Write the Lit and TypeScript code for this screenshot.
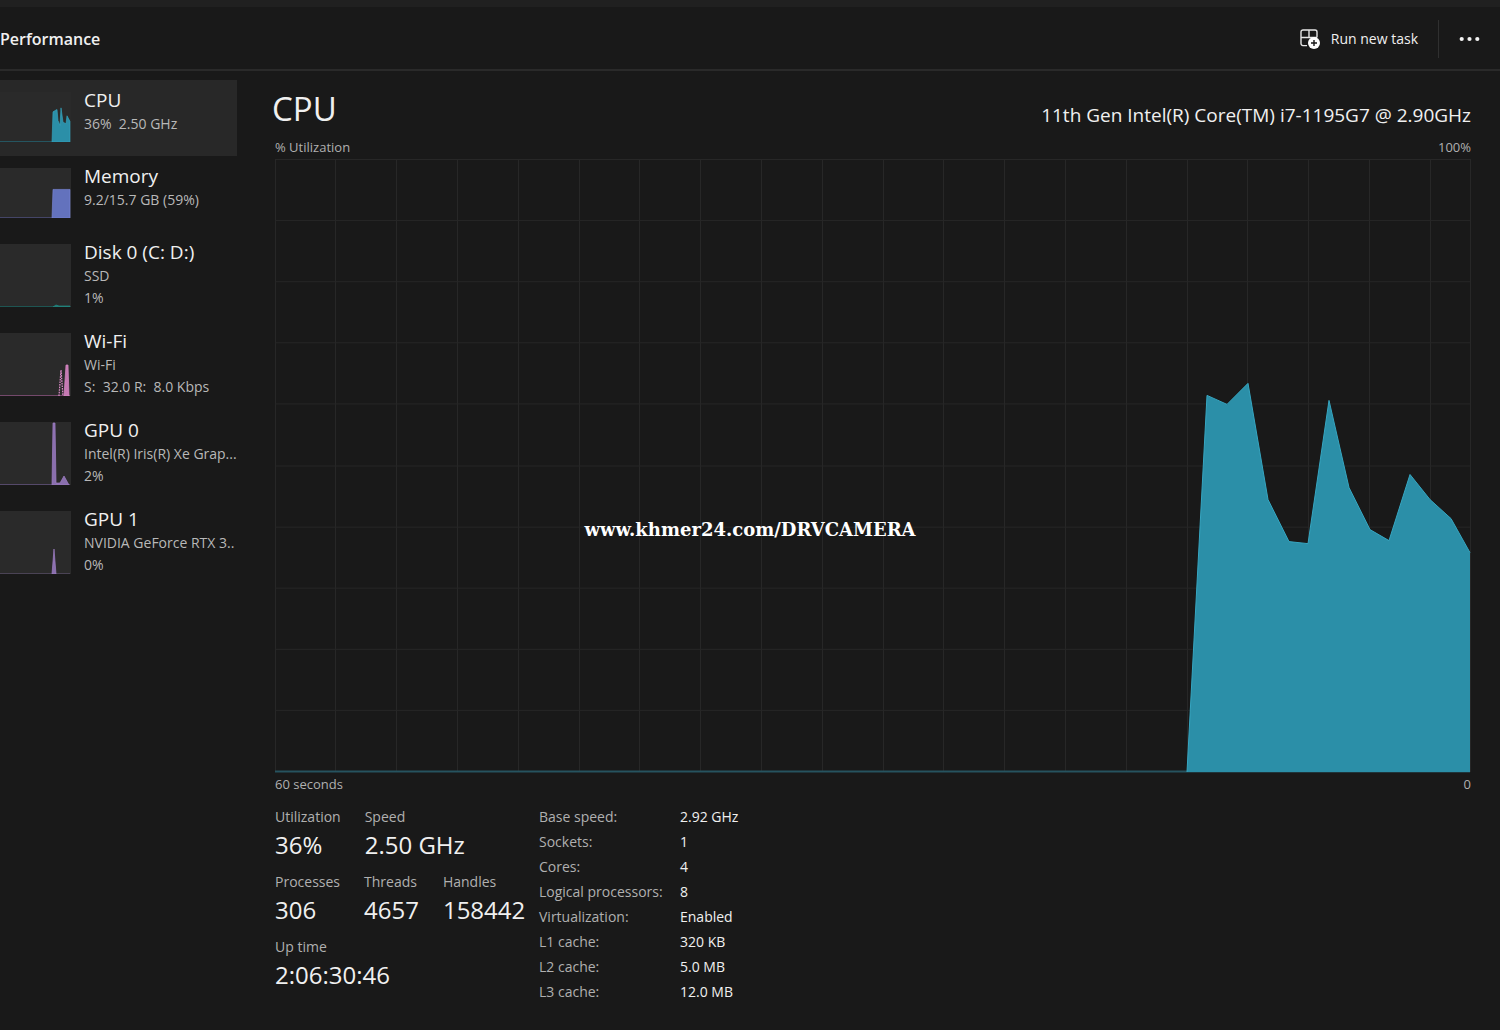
import { LitElement, html, svg, css } from "lit";
import { customElement, property, state } from "lit/decorators.js";

interface Device {
  name: string;
  lines: string[];
  color: string;
  edge: string;
  base: string;
  area: string;
  dashed?: string;
}

// Thumbnail paths are drawn in a 71 x 63 box, with the baseline at y = 63.
const DEVICES: Device[] = [
  { name: "CPU", lines: ["36%\u00a0 2.50 GHz"], color: "#2b8fa8", edge: "#36a6c1", base: "#24606e",
    area: "M52 63 L53 25 L57 22 L58 36 L60 42 L61 20 L63 38 L66 40 L67 30 L70 37 L70 63 Z" },
  { name: "Memory", lines: ["9.2/15.7 GB (59%)"], color: "#6372bd", edge: "#7c88da", base: "#4b4c75",
    area: "M52 63 L53 27 L70 27 L70 63 Z" },
  { name: "Disk 0 (C: D:)", lines: ["SSD", "1%"], color: "#1f7a75", edge: "#238a83", base: "#1e5552",
    area: "M53 63 L56 61 L59 62 L63 62 L66 62 L70 62 L70 63 Z" },
  { name: "Wi-Fi", lines: ["Wi-Fi", "S: \u00a032.0 R: \u00a08.0 Kbps"], color: "#c679b3", edge: "#d98ac6", base: "#74496b",
    area: "M64 63 L66 32 L68 32 L69 63 Z", dashed: "M59 63 L61 37 L63 63" },
  { name: "GPU 0", lines: ["Intel(R) Iris(R) Xe Grap...", "2%"], color: "#8a6fae", edge: "#a080c6", base: "#55496a",
    area: "M52 63 L53 1 L55 1 L56 61 L60 61 L64 54 L69 63 Z" },
  { name: "GPU 1", lines: ["NVIDIA GeForce RTX 3..", "0%"], color: "#8a6fae", edge: "#a080c6", base: "#4a4355",
    area: "M52 63 L54 38 L56 63 Z" },
];

const HISTORY: [number, number][] = [
  [912, 612], [932, 236], [952, 245], [973, 224], [993, 340], [1014, 382], [1033, 384],
  [1054, 241], [1074, 328], [1095, 370], [1114, 381], [1135, 315], [1155, 340], [1176, 359], [1195, 393],
];

const STAT_ROWS: [string, string][][] = [
  [["Utilization", "36%"], ["Speed", "2.50 GHz"]],
  [["Processes", "306"], ["Threads", "4657"], ["Handles", "158442"]],
  [["Up time", "2:06:30:46"]],
];

const DETAILS: [string, string][] = [
  ["Base speed:", "2.92 GHz"], ["Sockets:", "1"], ["Cores:", "4"], ["Logical processors:", "8"],
  ["Virtualization:", "Enabled"], ["L1 cache:", "320 KB"], ["L2 cache:", "5.0 MB"], ["L3 cache:", "12.0 MB"],
];

@customElement("device-list")
class DeviceList extends LitElement {
  @state() selected = 0;

  static styles = css`
    :host { display: block; }
    .list { list-style: none; margin: 0; padding: 0; }
    .item {
      display: flex; gap: 13px; width: 237px; min-height: 76px; box-sizing: border-box;
      margin: 0; padding: 0; border: 0; background: none; color: #f0f0f0;
      font: inherit; text-align: left; white-space: nowrap; cursor: pointer;
    }
    .item.selected { background: #282828; }
    .thumb { position: relative; flex: none; width: 71px; margin: 12px 0 14px; background: #2a2a2a; }
    .thumb svg { position: absolute; inset: 0; width: 100%; height: 100%; }
    .text { display: flex; flex-direction: column; padding: 8px 0 12px; }
    .name { font-size: 19px; line-height: 25px; }
    .line { font-size: 14px; line-height: 22px; color: #b8b8b8; }
  `;

  render() {
    return html`<ul class="list">
      ${DEVICES.map((d, i) => html`<li>
        <button class="item ${i === this.selected ? "selected" : ""}" @click=${() => (this.selected = i)}>
          <span class="thumb">
            <svg viewBox="0 0 71 63" preserveAspectRatio="none" aria-hidden="true">
              <path d="M0 62.5 H70" stroke=${d.base} fill="none" />
              <path d=${d.area} fill=${d.color} stroke=${d.edge} stroke-width=".7" />
              ${d.dashed ? svg`<path d=${d.dashed} fill="none" stroke=${d.edge} stroke-width="1.3" stroke-dasharray="1.6 1" />` : null}
            </svg>
          </span>
          <span class="text">
            <span class="name">${d.name}</span>
            ${d.lines.map((l) => html`<span class="line">${l}</span>`)}
          </span>
        </button>
      </li>`)}
    </ul>`;
  }
}

@customElement("usage-chart")
class UsageChart extends LitElement {
  @property({ attribute: false }) points: [number, number][] = [];

  static styles = css`
    :host { display: block; position: relative; }
    svg { position: absolute; inset: 0; width: 100%; height: 100%; overflow: visible; }
    .grid { stroke: #272727; fill: none; vector-effect: non-scaling-stroke; }
    .base { stroke: #26535f; stroke-width: 2; fill: none; vector-effect: non-scaling-stroke; }
    .area { fill: #2b8fa8; }
    .edge { stroke: #36a6c1; fill: none; vector-effect: non-scaling-stroke; }
  `;

  render() {
    const line = this.points.map(([x, y]) => `${x} ${y}`).join(" L");
    let grid = "";
    for (let i = 0; i < 20; i++) grid += `M${Math.floor(i * 60.8) + 0.5} 0 V612 `;
    for (let i = 0; i < 10; i++) grid += `M0 ${Math.floor(i * 61.2) + 0.5} H1195 `;
    grid += "M1195.5 0 V612";
    return html`<svg viewBox="0 0 1196 612" preserveAspectRatio="none" role="img" aria-label="% Utilization">
      <path class="grid" d=${grid} />
      <path class="base" d="M0 611.5 H1195" />
      <path class="area" d=${`M${line} L1195 612 Z`} />
      <path class="edge" d=${`M${line}`} />
    </svg>`;
  }
}

@customElement("app-root")
class AppRoot extends LitElement {
  static styles = css`
    :host {
      display: flex; flex-direction: column; position: relative; min-height: 100vh; box-sizing: border-box;
      border-top: 7px solid #202020; background: #191919; color: #f0f0f0;
      font-family: "Open Sans", "Noto Sans", sans-serif;
    }
    .header { display: flex; align-items: center; height: 61px; padding-top: 1px; border-bottom: 2px solid #2a2a2a; }
    .heading { flex: 1; margin: 0; font-size: 16px; line-height: 24px; font-weight: 600; }
    .action {
      display: flex; align-items: center; gap: 11px; margin: 0; padding: 0 20px; height: 38px;
      border: 0; background: none; color: #f0f0f0; font: inherit; font-size: 14px; cursor: pointer;
    }
    .run { border-right: 1px solid #303030; }
    .body { display: flex; flex: 1; }
    .side { flex: none; width: 275px; padding-top: 9px; }
    .main { display: flex; flex: 1; flex-direction: column; min-width: 0; padding: 14px 29px 26px 0; }
    .title { display: flex; align-items: center; justify-content: space-between; padding-bottom: 2px; }
    .resource { margin: 0 0 0 -3px; font-size: 33px; line-height: 48px; font-weight: 400; }
    .model { padding-top: 12px; font-size: 19px; line-height: 36px; }
    .scale { display: flex; justify-content: space-between; font-size: 13px; line-height: 24px; color: #b0b0b0; }
    .chart { flex: 1; min-height: 300px; }
    .info { display: flex; padding-top: 8px; }
    .stats { display: flex; flex: none; flex-direction: column; gap: 9px; width: 264px; }
    .row { display: flex; gap: 24px; margin: 0; }
    .label { font-size: 14px; line-height: 26px; color: #b0b0b0; }
    .value { margin: 0; font-size: 24px; line-height: 30px; }
    .details { display: grid; grid-template-columns: 141px auto; align-content: start; margin: 0; font-size: 14px; line-height: 25px; }
    .key { color: #b0b0b0; }
    .val { margin: 0; }
    .watermark {
      position: absolute; left: 50%; top: 523px; transform: translate(-50%, -50%);
      font-family: "DejaVu Serif", serif; font-weight: 700; font-size: 18px; line-height: 28px; color: #ffffff;
      pointer-events: none; white-space: nowrap;
    }
  `;

  render() {
    return html`
      <header class="header">
        <h1 class="heading">Performance</h1>
        <button class="action run">
          <svg width="20" height="20" viewBox="0 0 20 20" fill="none" stroke="#e6e6e6" stroke-width="1.4" aria-hidden="true">
            <path d="M7 16.6 H3 A2 2 0 0 1 1 14.6 V3 A2 2 0 0 1 3 1 H15 A2 2 0 0 1 17 3 V8.5 M1 8.5 H17 M9 1 V8.5" />
            <circle cx="14" cy="14" r="6" fill="#fff" stroke="none" />
            <path d="M14 11 V17 M11 14 H17" stroke="#191919" stroke-width="1.4" />
          </svg>
          Run new task
        </button>
        <button class="action" aria-label="More options">
          <svg width="21" height="6" viewBox="0 0 21 6" fill="#f4f4f4" aria-hidden="true">
            <circle cx="2.7" cy="3" r="2.1" /><circle cx="10.5" cy="3" r="2.1" /><circle cx="18.3" cy="3" r="2.1" />
          </svg>
        </button>
      </header>
      <div class="body">
        <nav class="side"><device-list></device-list></nav>
        <main class="main">
          <div class="title">
            <h2 class="resource">CPU</h2>
            <span class="model">11th Gen Intel(R) Core(TM) i7-1195G7 @ 2.90GHz</span>
          </div>
          <div class="scale"><span>% Utilization</span><span>100%</span></div>
          <usage-chart class="chart" .points=${HISTORY}></usage-chart>
          <div class="scale"><span>60 seconds</span><span>0</span></div>
          <div class="info">
            <div class="stats">
              ${STAT_ROWS.map((row) => html`<dl class="row">
                ${row.map(([k, v]) => html`<div><dt class="label">${k}</dt><dd class="value">${v}</dd></div>`)}
              </dl>`)}
            </div>
            <dl class="details">
              ${DETAILS.map(([k, v]) => html`<dt class="key">${k}</dt><dd class="val">${v}</dd>`)}
            </dl>
          </div>
        </main>
      </div>
      <div class="watermark">www.khmer24.com/DRVCAMERA</div>
    `;
  }
}
